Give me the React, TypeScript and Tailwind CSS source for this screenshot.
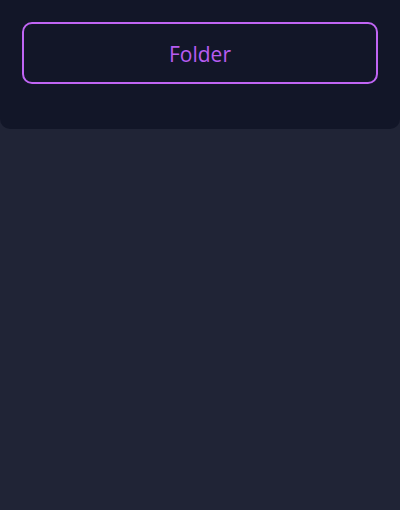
export default function App() {
  return (
    <div className="min-h-[510px] w-full bg-[#202436] font-['Open_Sans',_'Noto_Sans',_sans-serif]">
      <div className="rounded-b-[10px] bg-[#121628] px-[22px] pt-[22px] pb-[45px]">
        <button className="flex h-[62px] w-full items-center justify-center rounded-[10px] border-2 border-[#c065f4] pt-[3px] font-['Open_Sans',_sans-serif] text-[21px] text-[#b85cf2]">
          Folder
        </button>
      </div>
    </div>
  );
}
